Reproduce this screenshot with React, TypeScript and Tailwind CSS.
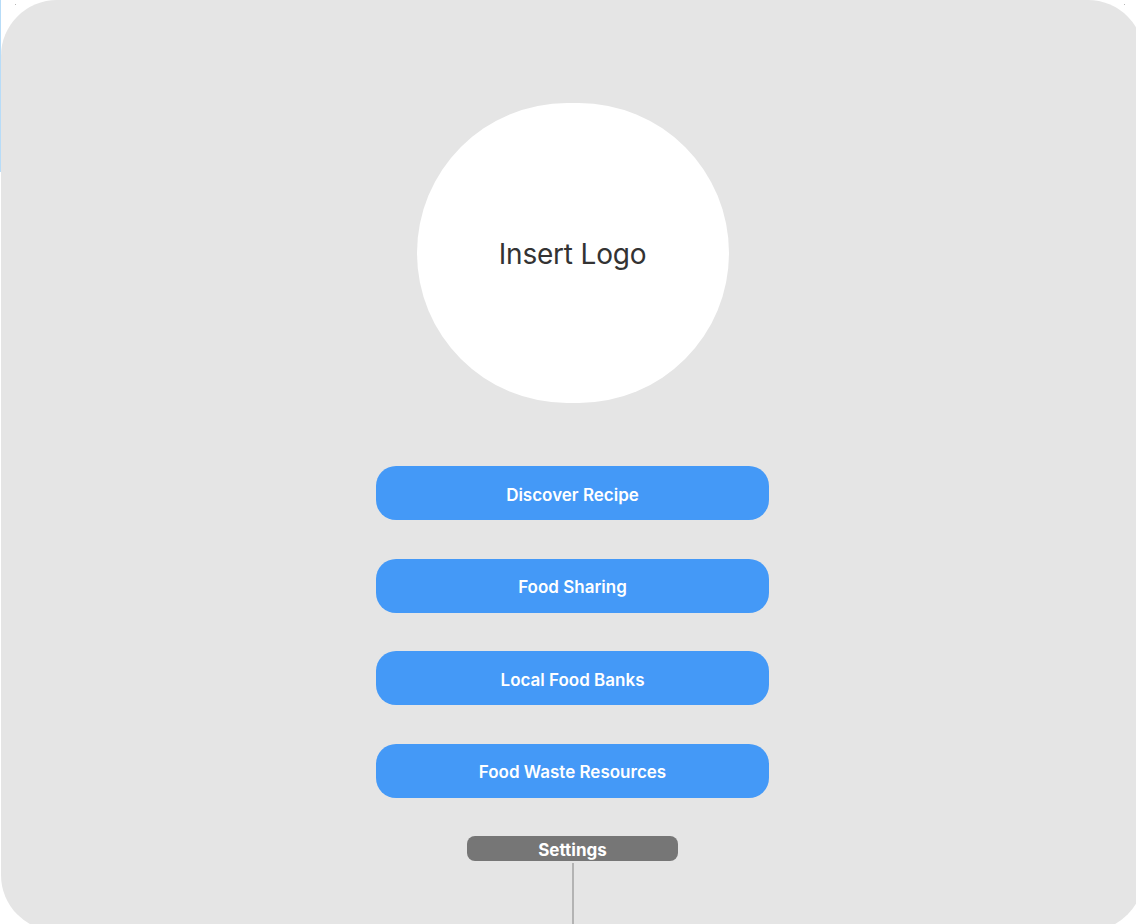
import React from "react";

const items = ["Discover Recipe", "Food Sharing", "Local Food Banks", "Food Waste Resources"];

export default function App() {
  return (
    <div className="relative w-[1136px] h-[924px] overflow-hidden bg-white" style={{ fontFamily: "Inter, 'Noto Sans', sans-serif" }}>
      <div className="absolute left-0 top-0 w-px h-[172px] bg-[#b7dcf8]" />
      <div className="absolute left-[15px] top-[4px] w-px h-px bg-[#b8b8b8]" />
      <div className="absolute left-[1124px] top-[4px] w-px h-px bg-[#b8b8b8]" />
      <div className="ml-[1px] w-[1143px] h-[931px] rounded-[56px] bg-[#e5e5e5] flex flex-col items-center pt-[103px] overflow-hidden">
        <div className="shrink-0 w-[312px] h-[300px] rounded-full bg-white flex items-center justify-center pt-[2px]">
          <span className="text-[28px] text-[#333333] tracking-[-0.2px]">Insert Logo</span>
        </div>
        <div className="shrink-0 mt-[63px] flex flex-col gap-[38.5px]">
          {items.map((t) => (
            <div key={t} className="shrink-0 w-[393px] h-[54px] rounded-[20px] bg-[#4499f7] flex items-center justify-center pt-[5px]">
              <span className="text-white text-[17px] font-semibold">{t}</span>
            </div>
          ))}
        </div>
        <div className="shrink-0 mt-[38px] w-[211px] h-[25px] rounded-[8px] bg-[#767676] flex items-center justify-center pt-[4px]">
          <span className="text-white text-[17px] font-bold leading-none">Settings</span>
        </div>
        <div className="shrink-0 mt-[2px] w-[2px] h-[80px] bg-[#b3b3b3]" />
      </div>
    </div>
  );
}
